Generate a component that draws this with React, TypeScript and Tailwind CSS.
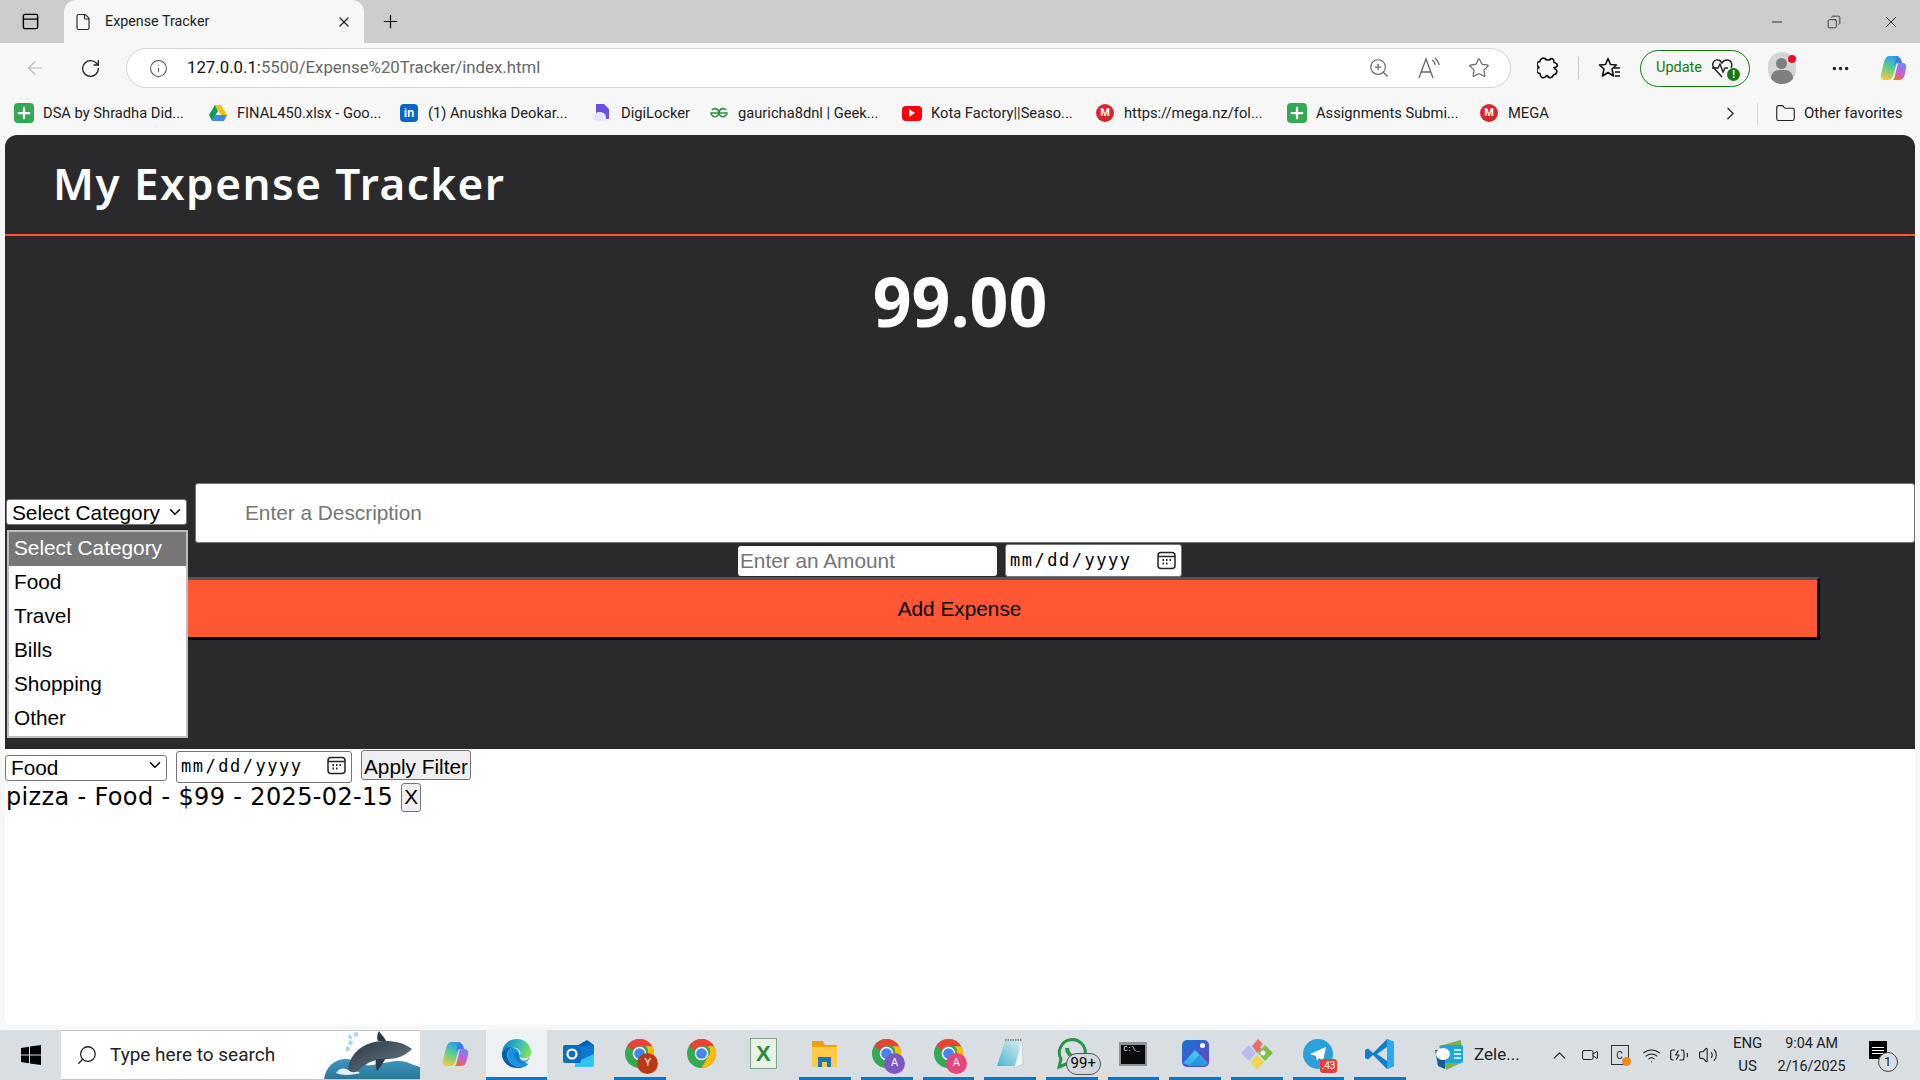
import {
  ArrowLeft,
  RotateCw,
  Info,
  ZoomIn,
  Star,
  Ellipsis,
  Minus,
  X,
  Plus,
  Copy,
  File,
  PanelTop,
  ChevronRight,
  ChevronUp,
  ChevronDown,
  Folder,
  Search,
  Wifi,
  Volume2,
  BatteryCharging,
  Video,
} from "lucide-react";

const PlusBox = () => (
  <span className="flex h-5 w-5 items-center justify-center rounded-sm bg-[#34a853] text-white">
    <Plus size={18} strokeWidth={3} />
  </span>
);

const MegaIcon = () => (
  <span className="flex h-[18px] w-[18px] items-center justify-center rounded-full bg-[#d9272e] text-[11px] font-bold text-white">
    M
  </span>
);

const DriveIcon = () => (
  <svg width="20" height="18" viewBox="0 0 20 18">
    <path d="M7 1h6l6 10h-6z" fill="#fbbc04" />
    <path d="M7 1 1 11l3 6 6-10z" fill="#0f9d58" />
    <path d="M4 17h12l3-6H7z" fill="#4285f4" />
  </svg>
);

const LinkedIn = () => (
  <span className="flex h-[18px] w-[18px] items-center justify-center rounded-sm bg-[#0a66c2] font-['Liberation_Sans',sans-serif] text-[12px] font-bold text-white">
    in
  </span>
);

const DigiLocker = () => (
  <svg width="18" height="20" viewBox="0 0 18 20">
    <path d="M3 1h8l5 5v10H3z" fill="#6c4fe0" />
    <path d="M1 12c2-3 4-3 6-3s5 1 6 4v5H3c-2 0-3-3-2-6z" fill="#e8e4ff" />
  </svg>
);

const GfgIcon = () => (
  <svg width="20" height="12" viewBox="0 0 20 12" fill="none" stroke="#2f8d46" strokeWidth="1.6">
    <path d="M10 6h8a4 4 0 1 1-1-3M10 6H2a4 4 0 1 0 1-3" />
  </svg>
);

const YouTube = () => (
  <span className="flex h-[15px] w-5 items-center justify-center rounded-[4px] bg-[#f00]">
    <span className="h-0 w-0 border-y-[4px] border-l-[6px] border-y-transparent border-l-white" />
  </span>
);

const bookmarks = [
  { width: "w-[194px]", icon: <PlusBox />, label: "DSA by Shradha Did..." },
  { width: "w-[191px]", icon: <DriveIcon />, label: "FINAL450.xlsx - Goo..." },
  { width: "w-[193px]", icon: <LinkedIn />, label: "(1) Anushka Deokar..." },
  { width: "w-[117px]", icon: <DigiLocker />, label: "DigiLocker" },
  { width: "w-[193px]", icon: <GfgIcon />, label: "gauricha8dnl | Geek..." },
  { width: "w-[193px]", icon: <YouTube />, label: "Kota Factory||Seaso..." },
  { width: "w-[192px]", icon: <MegaIcon />, label: "https://mega.nz/fol..." },
  { width: "w-[192px]", icon: <PlusBox />, label: "Assignments Submi..." },
  { width: "w-[242px]", icon: <MegaIcon />, label: "MEGA" },
];

const options = ["Select Category", "Food", "Travel", "Bills", "Shopping", "Other"];

const ChromeLogo = ({ badge, color }: { badge?: string; color?: string }) => (
  <span className="relative block h-[31px] w-[31px]">
    <svg width="31" height="31" viewBox="0 0 32 32">
      <circle cx="16" cy="16" r="15" fill="#34a853" />
      <path d="M16 1a15 15 0 0 1 13 7.5H16a7.5 7.5 0 0 0-7 5L3.5 8A15 15 0 0 1 16 1z" fill="#ea4335" />
      <path d="M29 8.5A15 15 0 0 1 16 31l6.500-11.500a7.500 7.500 0 0 0 0-11z" fill="#fbbc04" />
      <circle cx="16" cy="16" r="7" fill="#fff" />
      <circle cx="16" cy="16" r="5.500" fill="#4285f4" />
    </svg>
    {badge && (
      <span
        className={`absolute -right-[3px] -bottom-[5px] flex h-[21px] w-[21px] items-center justify-center rounded-full text-[11px] text-white ${color}`}
      >
        {badge}
      </span>
    )}
  </span>
);

const CopilotLogo = ({ id, size = 28 }: { id: string; size?: number }) => (
  <svg width={size} height={size} viewBox="0 0 28 28">
    <defs>
      <linearGradient id={`${id}a`} x1="0.6" y1="0" x2="0.3" y2="1">
        <stop offset="0" stopColor="#2a9df4" />
        <stop offset="0.5" stopColor="#5fd08a" />
        <stop offset="1" stopColor="#f7c83c" />
      </linearGradient>
      <linearGradient id={`${id}b`} x1="0.7" y1="0" x2="0.3" y2="1">
        <stop offset="0" stopColor="#6f8df0" />
        <stop offset="0.5" stopColor="#c05fe0" />
        <stop offset="1" stopColor="#f0703c" />
      </linearGradient>
    </defs>
    <path d="M10 2h7c2 0 3 1 2 3l-5 17c-1 3-3 4-5 4H6c-3 0-5-2-4-6l3-12c1-4 3-6 5-6z" fill={`url(#${id}a)`} />
    <path d="M14 26h6c4 0 5-3 6-6l1-6c1-3-1-5-3-5h-5l-3 12c-.5 3-1 4-2 5z" fill={`url(#${id}b)`} />
    <path d="M17 2c3 0 5 2 6 7h-4c-2 0-3 1-4 3l2-8c0-1 0-2 0-2z" fill="#3b7de8" />
  </svg>
);

const EdgeLogo = () => (
  <svg width="31" height="31" viewBox="0 0 32 32">
    <defs>
      <linearGradient id="edgeTop" x1="0" y1="0.4" x2="1" y2="0.6">
        <stop offset="0" stopColor="#0c83d0" />
        <stop offset="0.6" stopColor="#3cc3b0" />
        <stop offset="1" stopColor="#8be04f" />
      </linearGradient>
    </defs>
    <path d="M1 15C2 6 9 1 16 1c9 0 15 6 15 14 0 4-3 6-7 6-3 0-5-1-5-3 2-2 1-7-5-8-6 0-11 1-13 5z" fill="url(#edgeTop)" />
    <path d="M1 15c2-4 6-6 10-5-4 2-6 7-3 13 2 4 7 7 13 7 3 0 5-1 7-3-3 3-7 4-12 4C8 31 0 24 1 15z" fill="#0b5ea8" />
    <path d="M8 23c-3-6-1-11 3-13 4 0 8 2 8 8 0 4 2 7 6 7l3 2c-2 2-4 3-7 3-6 0-11-3-13-7z" fill="#1694e0" />
    <path d="M13 16c3-2 6-1 6 2 0 3 2 5 5 5 2 0 4-1 6-4-1 5-5 7-8 7-5 0-8-4-9-10z" fill="#0f6cbd" opacity="0.6" />
  </svg>
);

const OutlookLogo = () => (
  <svg width="31" height="27" viewBox="0 0 31 27">
    <path d="M12 7 24 0l7 5v9L18 20z" fill="#0a5fb4" />
    <path d="M12 7h19v18a2 2 0 0 1-2 2H12z" fill="#32c5f4" />
    <path d="M12 7 31 5v9L18 20l-6-2z" fill="#0f78d4" />
    <rect y="5" width="18" height="18" rx="2" fill="#0f6cbd" />
    <circle cx="9" cy="14" r="4.500" fill="none" stroke="#fff" strokeWidth="2.200" />
  </svg>
);

const ExcelLogo = () => (
  <span className="flex h-[31px] w-[27px] items-center justify-center border border-[#7aa98a] bg-[#e8f3e6] font-['Liberation_Sans',sans-serif] text-[22px] font-bold text-[#2e8b3d]">
    X
  </span>
);

const FilesLogo = () => (
  <svg width="27" height="30" viewBox="0 0 27 30">
    <path d="M1 2h11l2 4h12v4H1z" fill="#e8a317" />
    <path d="M1 8h25v20H1z" fill="#ffcb45" />
    <path d="M7 28V18h13v10h-4v-5h-5v5z" fill="#1678c8" />
  </svg>
);

const NotepadLogo = () => (
  <svg width="29" height="32" viewBox="0 0 29 32">
    <defs>
      <linearGradient id="padFill" x1="0" y1="1" x2="1" y2="0">
        <stop offset="0" stopColor="#4fb3cc" />
        <stop offset="1" stopColor="#d8eef2" />
      </linearGradient>
    </defs>
    <path d="M26 3 27 26 18 30V8z" fill="#f4f4f4" stroke="#b8b8b8" strokeWidth="0.500" />
    <path d="M9 3h17l-7 25H1z" fill="url(#padFill)" />
    <path d="M9 2h17" stroke="#8a8a8a" strokeWidth="2" strokeDasharray="1.500 1" />
  </svg>
);

const WhatsAppLogo = () => (
  <span className="relative block h-8 w-8">
    <svg width="31" height="31" viewBox="0 0 31 31" fill="none" stroke="#25954a" strokeWidth="3">
      <path d="M3 29l2-8a13 13 0 1 1 5 5z" />
      <path d="M11 10c0 5 4 9 9 10" strokeWidth="4" />
    </svg>
    <span className="absolute top-[15px] left-[10px] flex h-[22px] w-[35px] items-center justify-center rounded-full border border-[#555] bg-[#d4d8dc] text-[15px] text-black">
      99+
    </span>
  </span>
);

const TerminalLogo = () => (
  <span className="block h-[24px] w-[28px] border-[2px] border-t-[3px] border-[#8d9296] bg-[#0a0a0a] pl-[2px] font-['Liberation_Mono',monospace] text-[7px] leading-[8px] text-white">
    C:\_
  </span>
);

const PhotosLogo = () => (
  <svg width="27" height="27" viewBox="0 0 27 27">
    <defs>
      <linearGradient id="photoBg" x1="0" y1="0" x2="1" y2="1">
        <stop offset="0" stopColor="#1877d2" />
        <stop offset="1" stopColor="#6a3fc0" />
      </linearGradient>
      <linearGradient id="photoHill" x1="0" y1="1" x2="1" y2="0">
        <stop offset="0" stopColor="#2aa8e8" />
        <stop offset="1" stopColor="#54d6f5" />
      </linearGradient>
    </defs>
    <rect width="27" height="27" rx="5" fill="url(#photoBg)" />
    <circle cx="20.500" cy="5.500" r="2.500" fill="#fff" />
    <path d="M1 23 13 10l13 13-3 3H8z" fill="url(#photoHill)" />
    <path d="M8 25l9-10 9 8-3 3H9z" fill="#1b6fc9" opacity="0.5" />
  </svg>
);

const GemLogo = () => (
  <svg width="32" height="32" viewBox="0 0 32 32">
    <path d="M16 15 11 8l6-7 5 5-3 3 2 2z" fill="#e5716a" />
    <path d="M17 15l7-8 8 8-8 8z" fill="#7cc04b" />
    <circle cx="22" cy="15" r="2.500" fill="#fff" />
    <path d="M16 17l7 7-7 8-7-8z" fill="#f2d553" />
    <path d="M15 15l-7 8-8-8 8-8z" fill="#b6bdf2" />
  </svg>
);

const TelegramLogo = () => (
  <span className="relative block h-[30px] w-[30px]">
    <span className="flex h-[30px] w-[30px] items-center justify-center rounded-full bg-[#2aa1da]">
      <svg width="18" height="18" viewBox="0 0 18 18">
        <path d="M1 9 17 2l-3 14-4-3-2 3-1-5z" fill="#fff" />
      </svg>
    </span>
    <span className="absolute -right-[4px] -bottom-[4px] rounded-[3px] bg-[#ee3b3b] px-[2px] text-[10px] leading-[14px] text-white">
      .43
    </span>
  </span>
);

const VSCodeLogo = () => (
  <svg width="30" height="32" viewBox="0 0 30 32">
    <path d="M22 1 8 15 3 10.500 0 12v8l3 1.500L8 17l14 14 7-3V4z" fill="#0f7fcb" />
    <path d="M22 9 12 16l10 7z" fill="#d8dde2" />
    <path d="M22 1l7 3v24l-7 3z" fill="#29a9ee" />
  </svg>
);

const ZeleLogo = () => (
  <svg width="30" height="32" viewBox="0 0 30 32">
    <path d="M5 7 27 1l2 22-17 8z" fill="#7fb24a" />
    <rect x="6" y="6" width="23" height="18" rx="2" fill="#1ba8d8" />
    <path d="M1 11h10v19l-7-3z" fill="#135e9e" />
    <ellipse cx="9" cy="15" rx="7" ry="6" fill="#fff" />
    <path d="M20 11h7M20 15h7M20 19h7" stroke="#fff" strokeWidth="1.500" />
  </svg>
);

const ReadAloud = () => (
  <svg width="24" height="24" viewBox="0 0 24 24" fill="none" stroke="#666" strokeWidth="1.300">
    <path d="M2 22 9 3l7 19M4.500 16h9" />
    <path d="M15 4c2 1 3 3 3 5M18 2c2 2 4 4 4 7" />
  </svg>
);

const ExtensionIcon = () => (
  <svg width="22" height="24" viewBox="0 0 22 24" fill="none" stroke="#111" strokeWidth="1.700" strokeLinejoin="round">
    <path d="M8 2.500c1 2 5 2 6 0 2 0 3 2 3 4 2 0 4 2 3 4-1 1-2 1-3 1 0 1 1 1 2 2 2 2 0 5-2 5-1 0-1 3-3 3-2 1-3-1-4-2-1 1-3 3-5 2s-2-3-2-4c-2 0-4-2-3-4 0-1 2-2 2-2s-2-2-2-3c0-2 2-3 3-3 0-2 2-4 5-3z" />
  </svg>
);

const FavoritesIcon = () => (
  <svg width="24" height="24" viewBox="0 0 24 24" fill="none" stroke="#111" strokeWidth="1.600" strokeLinejoin="round">
    <path d="M10 2.500l2.500 6 6 .5-4.500 4 1.500 7-5.500-3.500L4.500 20l1.500-7-4.500-4 6-.5z" />
    <path d="M16 12h6M17 16h5M17 20h5" />
  </svg>
);

const HealthIcon = () => (
  <svg width="24" height="24" viewBox="0 0 24 24" fill="none" stroke="#222" strokeWidth="1.400">
    <path d="M11 21 3 12c-3-4 0-9 4-8 2 0 3 1 4 3 1-2 3-3 5-3 4 0 6 4 4 8" />
    <path d="M1 12h6l2-4 3 8 2-4h3" />
  </svg>
);

const taskbarApps = [
  { icon: <CopilotLogo id="cpTask" />, line: false },
  { icon: <EdgeLogo />, line: true, active: true },
  { icon: <OutlookLogo />, line: false },
  { icon: <ChromeLogo badge="Y" color="bg-[#b93a16]" />, line: true },
  { icon: <ChromeLogo />, line: false },
  { icon: <ExcelLogo />, line: false },
  { icon: <FilesLogo />, line: true },
  { icon: <ChromeLogo badge="A" color="bg-[#7e57c2]" />, line: true },
  { icon: <ChromeLogo badge="A" color="bg-[#e8457c]" />, line: true },
  { icon: <NotepadLogo />, line: true },
  { icon: <WhatsAppLogo />, line: true },
  { icon: <TerminalLogo />, line: true },
  { icon: <PhotosLogo />, line: true },
  { icon: <GemLogo />, line: true },
  { icon: <TelegramLogo />, line: true },
  { icon: <VSCodeLogo />, line: true },
];

function TabStrip() {
  return (
    <div className="flex h-[43px] items-end bg-[#cccccc]">
      <div className="flex h-[43px] w-[64px] items-center justify-center pr-[4px] text-black">
        <PanelTop size={19} strokeWidth={1.8} />
      </div>
      <div className="flex h-[43px] w-[300px] items-center rounded-t-xl bg-[#f7f7f7] pl-[10px] pr-[12px] text-[14.3px] text-[#222]">
        <File size={18} strokeWidth={1.5} />
        <span className="ml-[13px] flex-1">Expense Tracker</span>
        <X size={16} strokeWidth={1.8} />
      </div>
      <div className="flex h-[43px] w-[52px] items-center justify-center text-black">
        <Plus size={21} strokeWidth={1.4} />
      </div>
      <div className="flex h-[43px] flex-1 items-center justify-end pr-[1px] text-[#222]">
        <span className="flex w-[57px] justify-center">
          <Minus size={16} strokeWidth={1.4} />
        </span>
        <span className="flex w-[57px] justify-center">
          <Copy size={14} strokeWidth={1.4} className="scale-x-[-1]" />
        </span>
        <span className="flex w-[57px] justify-center">
          <X size={18} strokeWidth={1.2} />
        </span>
      </div>
    </div>
  );
}

function AddressBar() {
  return (
    <div className="flex h-[49px] items-center bg-[#f7f7f7] pt-[1px] text-[#222]">
      <span className="flex w-[70px] justify-center text-[#b8b8b8]">
        <ArrowLeft size={22} strokeWidth={1.2} />
      </span>
      <span className="flex w-[40px] justify-center">
        <RotateCw size={21} strokeWidth={1.5} />
      </span>
      <div className="ml-[16px] flex h-[40px] w-[1385px] items-center rounded-full border border-[#d4d4d4] bg-white pl-[22px] pr-[20px]">
        <Info size={19} strokeWidth={1.3} className="text-[#555]" />
        <span className="ml-[19px] flex-1 text-[16.8px] text-[#111]">
          127.0.0.1:<span className="text-[#666]">5500/Expense%20Tracker/index.html</span>
        </span>
        <div className="flex items-center gap-[27px] text-[#666]">
          <ZoomIn size={22} strokeWidth={1.3} />
          <ReadAloud />
          <Star size={22} strokeWidth={1.3} />
        </div>
      </div>
      <span className="ml-[25px] flex w-[24px] justify-center">
        <ExtensionIcon />
      </span>
      <span className="ml-[18px] h-[22px] w-px bg-[#c8c8c8]" />
      <span className="ml-[19px] flex w-[24px] justify-center">
        <FavoritesIcon />
      </span>
      <div className="relative ml-[18px] flex h-[37px] w-[110px] items-center rounded-full border border-[#107c10] pl-[15px] text-[14.5px] text-[#107c10]">
        Update
        <span className="ml-[9px]">
          <HealthIcon />
        </span>
        <span className="absolute top-[17px] left-[86px] flex h-[13px] w-[13px] items-center justify-center rounded-full bg-[#107c10] text-[10px] font-bold text-white">
          !
        </span>
      </div>
      <div className="relative ml-[18px] h-[32px] w-[28px] overflow-hidden rounded-full bg-[#d5d5d5]">
        <span className="absolute top-[6px] left-[8px] h-[11px] w-[11px] rounded-full bg-[#7f7f7f]" />
        <span className="absolute top-[18px] left-[3px] h-[16px] w-[22px] rounded-full bg-[#7f7f7f]" />
      </div>
      <span className="relative -ml-[8px] -mt-[18px] h-[8px] w-[8px] rounded-full bg-[#e81123]" />
      <span className="ml-[32px] flex w-[24px] justify-center">
        <Ellipsis size={21} />
      </span>
      <span className="ml-[27px]">
        <CopilotLogo id="cpBar" size={28} />
      </span>
    </div>
  );
}

function BookmarkBar() {
  return (
    <div className="flex h-[43px] items-center bg-[#f7f7f7] pl-[14px] text-[14.7px] text-[#222]">
      {bookmarks.map((b) => (
        <div key={b.label} className={`flex items-center ${b.width}`}>
          <span className="flex w-[20px] justify-center">{b.icon}</span>
          <span className="ml-[9px] whitespace-nowrap">{b.label}</span>
        </div>
      ))}
      <ChevronRight size={21} strokeWidth={1.4} className="-ml-[1px]" />
      <span className="ml-[16px] h-[22px] w-px bg-[#d8d8d8]" />
      <Folder size={21} strokeWidth={1.3} className="ml-[17px]" />
      <span className="ml-[8px] whitespace-nowrap text-[15px]">Other favorites</span>
    </div>
  );
}

function SelectBox({ value, className }: { value: string; className: string }) {
  return (
    <div className={`relative ${className}`}>
      <select className="h-full w-full appearance-none rounded-[3px] border border-[#767676] bg-white pl-[5px] text-[20.8px] leading-[23px] text-black">
        <option>{value}</option>
      </select>
      <ChevronDown size={18} strokeWidth={2} className="pointer-events-none absolute top-[4px] right-[3px] text-black" />
    </div>
  );
}

function DateField({ className }: { className: string }) {
  return (
    <div className={`relative ${className}`}>
      <input
        type="date"
        className="h-full w-full rounded-[3px] border border-[#767676] bg-white pl-[3px] pr-[4px] font-['DejaVu_Sans_Mono',monospace] text-[17px] tracking-[1.5px] text-black [&::-webkit-calendar-picker-indicator]:opacity-0"
      />
      <svg
        width="19"
        height="19"
        viewBox="0 0 19 19"
        fill="none"
        stroke="#222"
        strokeWidth="1.500"
        className="pointer-events-none absolute top-[7px] right-[6px]"
      >
        <rect x="1" y="1.500" width="17" height="16" rx="3" />
        <path d="M1 5.500h17" />
        <path d="M5.500 9h1.500M9 9h1.500M12.500 9H14M5.500 12.500h1.500M9 12.500h1.500" strokeWidth="1.800" />
      </svg>
    </div>
  );
}

function ExpenseForm() {
  return (
    <div className="font-['Liberation_Sans',sans-serif]">
      <div className="relative flex items-center">
        <SelectBox value="Select Category" className="mb-[2px] ml-px h-[26px] w-[181px]" />
        <input
          placeholder="Enter a Description"
          className="ml-[8px] h-[60px] flex-1 rounded-[3px] border border-[#767676] bg-white pl-[49px] text-[20.8px] placeholder:text-[#757575]"
        />
        <ul className="absolute top-[47px] left-[2px] z-10 w-[181px] border-2 border-[#bdbdbd] bg-white text-[20.8px] text-black">
          {options.map((o, i) => (
            <li
              key={o}
              className={`h-[34px] pl-[5px] leading-[32px] ${i === 0 ? "bg-[#777777] text-white" : ""}`}
            >
              {o}
            </li>
          ))}
        </ul>
      </div>
      <div className="flex h-[34px] items-center justify-center gap-[8px] pt-[1px]">
        <input
          placeholder="Enter an Amount"
          className="h-[30px] w-[259px] rounded-[3px] bg-white pl-[2px] text-[20.8px] placeholder:text-[#757575]"
        />
        <DateField className="h-[33px] w-[177px]" />
      </div>
      <button className="mx-auto block h-[63px] w-[1720px] border-t-[3px] border-r-[3px] border-b-[3px] border-t-[#555] border-r-black border-b-black bg-[#ff5733] pl-[2px] text-[20.8px] text-black">
        Add Expense
      </button>
    </div>
  );
}

function ExpensePage() {
  return (
    <main className="mx-[5px] flex flex-1 flex-col overflow-hidden rounded-t-xl rounded-b-md bg-white">
      <section className="h-[614px] bg-[#2a2a2c] text-white">
        <h1 className="flex h-[101px] items-center border-b-2 border-[#ff5733] pb-[3px] pl-[48px] font-['Noto_Sans',sans-serif] text-[44px] font-semibold tracking-[1.5px]">
          My Expense Tracker
        </h1>
        <div className="flex h-[247px] justify-center pt-[20px] font-['Noto_Sans',sans-serif] text-[68px] leading-[90px] font-bold">
          99.00
        </div>
        <ExpenseForm />
      </section>
      <div className="flex items-center font-['Liberation_Sans',sans-serif] text-[20.8px] text-black">
        <SelectBox value="Food" className="h-[26px] w-[162px]" />
        <DateField className="ml-[9px] h-[32px] w-[176px]" />
        <button className="ml-[9px] h-[30px] w-[110px] rounded-[3px] border border-[#767676] bg-[#efefef] pb-[3px]">
          Apply Filter
        </button>
      </div>
      <div className="mt-[1px] flex items-center pl-[1px] font-['DejaVu_Sans',sans-serif] text-[24px] leading-[30px] text-black">
        <span className="tracking-[0.35px]">pizza - Food - $99 - 2025-02-15</span>
        <button className="ml-[8px] h-[29px] w-[20px] rounded-[3px] border border-[#767676] bg-[#efefef] font-['Liberation_Sans',sans-serif] text-[20.8px] leading-none">
          X
        </button>
      </div>
    </main>
  );
}

function Whale() {
  return (
    <svg width="96" height="50" viewBox="0 0 96 50" className="absolute right-0 bottom-0">
      <defs>
        <linearGradient id="sea" x1="0" y1="0" x2="0" y2="1">
          <stop offset="0" stopColor="#3f97bf" />
          <stop offset="1" stopColor="#2a7699" />
        </linearGradient>
        <linearGradient id="whaleBody" x1="0" y1="0" x2="1" y2="1">
          <stop offset="0" stopColor="#2d3a46" />
          <stop offset="1" stopColor="#6a7a88" />
        </linearGradient>
      </defs>
      <path d="M0 50c2-12 10-20 22-20 10 0 14 8 26 6 14-2 24-6 34-3 6 2 10 4 14 5v12z" fill="url(#sea)" />
      <path d="M12 44c4-6 10-5 14-2 4 0 8 0 10 2-6 2-18 3-24 0z" fill="#e3f3fa" />
      <path d="M24 40c2-16 16-28 36-28 12 0 20 2 28 8-6 6-14 10-24 10-12 0-20 2-30 12-4 2-8 2-10-2z" fill="url(#whaleBody)" />
      <path d="M54 12c-2-4 0-8 1-10 2 3 6 7 7 10z" fill="#2d3a46" />
      <path d="M52 30c4 0 8 0 10-1-3 4-5 9-9 13-1-4-2-8-1-12z" fill="#2d3a46" />
      <path d="M24 22c-1-3 1-7 4-10M34 5c-4 1-7 2-9 4" stroke="#a9d6ea" strokeWidth="4" strokeDasharray="4 3" fill="none" />
    </svg>
  );
}

function Taskbar() {
  return (
    <footer className="mt-[5px] flex h-[50px] items-center bg-[#d9dee3] font-['Roboto',sans-serif] text-[#222]">
      <div className="flex h-full w-[61px] items-center justify-center">
        <svg width="20" height="20" viewBox="0 0 20 20" fill="#000">
          <path d="M0 3l8-1.200v7.700H0zM9 1.600 20 0v9.500H9zM0 10.500h8v7.700L0 17zM9 10.500h11V20L9 18.400z" />
        </svg>
      </div>
      <div className="relative flex h-full w-[359px] items-center overflow-hidden border-y border-[#c6c6c6] bg-white pl-[15px] text-[19px]">
        <Search size={22} strokeWidth={1.4} className="scale-x-[-1]" />
        <span className="ml-[12px]">Type here to search</span>
        <Whale />
      </div>
      <div className="ml-[4px] flex h-full">
        {taskbarApps.map((app, i) => (
          <div
            key={i}
            className={`relative flex h-full w-[61.7px] items-center justify-center pb-[3px] ${app.active ? "bg-[#eef1f3]" : ""}`}
          >
            {app.icon}
            {app.line && (
              <span
                className={`absolute bottom-0 h-[3px] bg-[#0078d4] ${app.active ? "inset-x-0" : "inset-x-[5px]"}`}
              />
            )}
          </div>
        ))}
      </div>
      <div className="ml-[23px] flex items-center">
        <ZeleLogo />
        <span className="ml-[10px] text-[17px]">Zele...</span>
      </div>
      <div className="ml-[29px] flex items-center">
        <ChevronUp size={21} strokeWidth={1.4} />
        <Video size={18} strokeWidth={1.3} className="ml-[11px]" />
        <span className="relative ml-[12px] flex h-[20px] w-[18px] items-center justify-center border border-[#333] text-[10px]">
          C
          <span className="absolute -right-[3px] -bottom-[2px] h-[9px] w-[9px] rounded-full bg-[#f28c18]" />
        </span>
        <Wifi size={19} strokeWidth={1.3} className="ml-[13px]" />
        <BatteryCharging size={20} strokeWidth={1.4} className="ml-[8px]" />
        <Volume2 size={20} strokeWidth={1.3} className="ml-[9px]" />
      </div>
      <div className="ml-[12px] w-[36px] text-center text-[15px] leading-[23px]">
        <div>ENG</div>
        <div>US</div>
      </div>
      <div className="ml-[3px] w-[86px] text-center text-[14.3px] leading-[23px]">
        <div>9:04 AM</div>
        <div>2/16/2025</div>
      </div>
      <div className="relative ml-[12px] h-[32px] w-[24px]">
        <span className="absolute top-[2px] left-[2px] flex h-[18px] w-[18px] flex-col justify-center gap-[2px] bg-black px-[3px]">
          <span className="h-px bg-white" />
          <span className="h-px bg-white" />
          <span className="h-px bg-white" />
        </span>
        <span className="absolute top-[13px] left-[11px] flex h-[20px] w-[20px] items-center justify-center rounded-full border border-[#444] bg-[#d9dee3] text-[13px]">
          1
        </span>
      </div>
    </footer>
  );
}

export default function App() {
  return (
    <div className="flex h-[1080px] w-[1920px] flex-col overflow-hidden bg-[#f7f7f7] font-['Roboto',sans-serif]">
      <TabStrip />
      <AddressBar />
      <BookmarkBar />
      <ExpensePage />
      <Taskbar />
    </div>
  );
}
